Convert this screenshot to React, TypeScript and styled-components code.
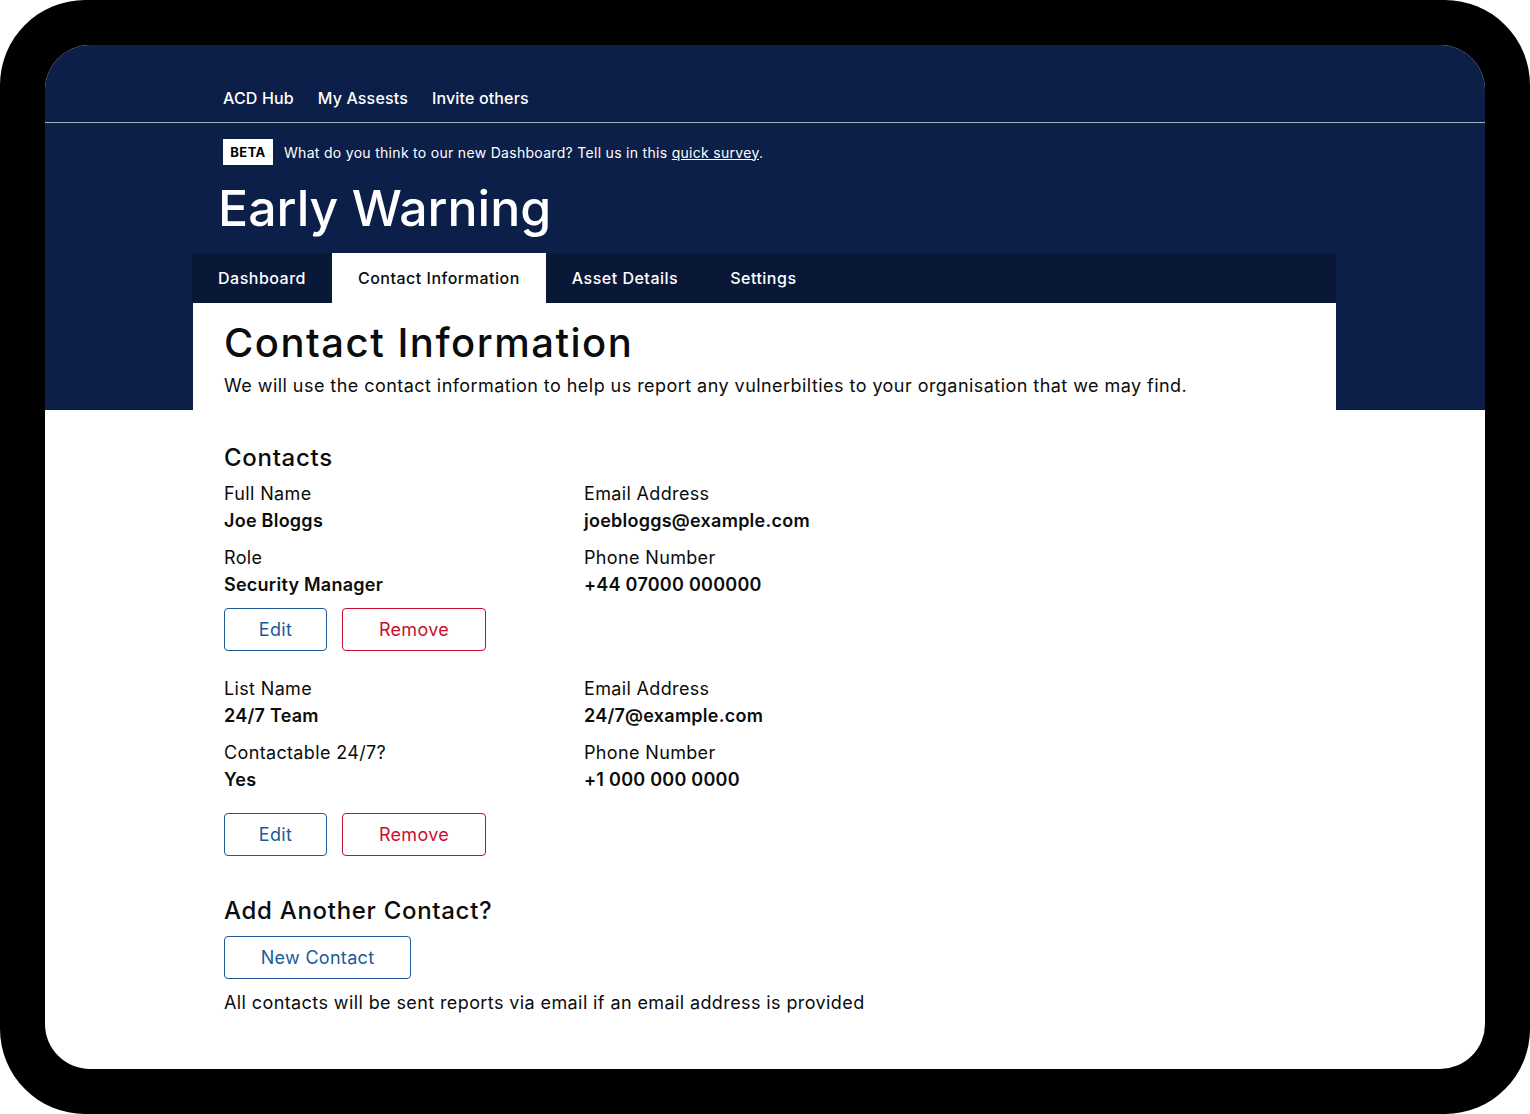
import React from "react";
import styled, { createGlobalStyle } from "styled-components";

const Global = createGlobalStyle`
  html, body { margin: 0; padding: 0; background: #ffffff; }
  body { font-family: "Inter", "Noto Sans", sans-serif; color: #0b0c0c; }
  * { box-sizing: border-box; }
`;

const NAVY = "#0c1f48";
const NAVY_DARK = "#0a1838";

const Frame = styled.div`
  width: 1530px;
  height: 1114px;
  background: #000;
  border-radius: 85px;
  padding: 45px;
`;

const Screen = styled.div`
  width: 100%;
  height: 100%;
  background: #fff;
  border-radius: 45px;
  overflow: hidden;
`;

const Header = styled.header`
  background: ${NAVY};
  color: #fff;
`;

const TopNav = styled.nav`
  display: flex;
  gap: 24px;
  padding: 42px 0 13px 178px;
  border-bottom: 1px solid #a9afbd;
`;

const NavLink = styled.a`
  font-size: 16px;
  line-height: 22px;
  font-weight: 500;
  letter-spacing: 0.15px;
  color: #fff;
  text-decoration: none;
`;

const Container = styled.div`
  width: 1144px;
  margin: 0 0 0 147px;
`;

const Intro = styled.div`
  padding: 16px 31px 15px;
`;

const BetaRow = styled.div`
  display: flex;
  align-items: center;
  gap: 11px;
  font-size: 14px;
  letter-spacing: 0.3px;
`;

const BetaTag = styled.span`
  display: inline-flex;
  align-items: center;
  justify-content: center;
  width: 50px;
  height: 26px;
  background: #fff;
  color: #000;
  font-weight: 700;
  font-size: 13px;
  letter-spacing: 0.4px;
`;

const Survey = styled.a`
  color: #fff;
  text-decoration: underline;
`;

const Title = styled.h1`
  margin: 13px 0 0 -5px;
  font-size: 50px;
  line-height: 60px;
  font-weight: 500;
`;

const Tabs = styled.div`
  display: flex;
  height: 50px;
  background: ${NAVY_DARK};
`;

const Tab = styled.a<{ $active?: boolean }>`
  display: flex;
  align-items: center;
  padding: 0 26px 0 26px;
  font-size: 16px;
  font-weight: 500;
  letter-spacing: 0.5px;
  text-decoration: none;
  color: ${(p) => (p.$active ? "#0b0c0c" : "#fff")};
  background: ${(p) => (p.$active ? "#fff" : "transparent")};
`;

const Panel = styled.div`
  background: #fff;
  color: #0b0c0c;
  margin-left: 1px;
  padding: 16px 31px 11px 31px;
`;

const PageTitle = styled.h2`
  margin: 0;
  font-size: 40px;
  line-height: 48px;
  font-weight: 500;
  letter-spacing: 1.5px;
`;

const Lead = styled.p`
  margin: 6px 0 0;
  font-size: 18px;
  line-height: 26px;
  letter-spacing: 0.45px;
`;

const Main = styled.main`
  padding: 32px 32px 0;
`;

const SectionTitle = styled.h3<{ $mt?: number }>`
  margin: ${(p) => p.$mt ?? 0}px 0 0;
  font-size: 24px;
  line-height: 32px;
  font-weight: 500;
  letter-spacing: 0.7px;
`;

const ContactBlock = styled.section<{ $mt: number }>`
  margin-top: ${(p) => p.$mt}px;
`;

const Fields = styled.dl`
  display: grid;
  grid-template-columns: 360px 1fr;
  row-gap: 10px;
  margin: 0;
`;

const Field = styled.div``;

const Label = styled.dt`
  font-size: 18px;
  line-height: 27px;
  letter-spacing: 0.35px;
`;

const Value = styled.dd`
  margin: 0;
  font-size: 18px;
  line-height: 27px;
  font-weight: 600;
  letter-spacing: 0.25px;
`;

const Actions = styled.div<{ $mt: number }>`
  display: flex;
  gap: 15px;
  margin-top: ${(p) => p.$mt}px;
`;

const Button = styled.button<{ $tone: "blue" | "red"; $w: number }>`
  width: ${(p) => p.$w}px;
  height: 43px;
  background: #fff;
  border: 1px solid ${(p) => (p.$tone === "blue" ? "#1d5a96" : "#c8102e")};
  color: ${(p) => (p.$tone === "blue" ? "#1d5a96" : "#c8102e")};
  border-radius: 4px;
  font-family: inherit;
  font-size: 18px;
  letter-spacing: 0.3px;
  cursor: pointer;
`;

const Note = styled.p`
  margin: 10px 0 0;
  font-size: 18px;
  line-height: 27px;
  letter-spacing: 0.4px;
`;

type FieldT = { label: string; value: string };

const contacts: { fields: FieldT[]; gap: number; mt: number }[] = [
  {
    fields: [
      { label: "Full Name", value: "Joe Bloggs" },
      { label: "Email Address", value: "joebloggs@example.com" },
      { label: "Role", value: "Security Manager" },
      { label: "Phone Number", value: "+44 07000 000000" },
    ],
    gap: 10,
    mt: 6,
  },
  {
    fields: [
      { label: "List Name", value: "24/7 Team" },
      { label: "Email Address", value: "24/7@example.com" },
      { label: "Contactable 24/7?", value: "Yes" },
      { label: "Phone Number", value: "+1 000 000 0000" },
    ],
    gap: 20,
    mt: 24,
  },
];

export default function App() {
  return (
    <>
      <Global />
      <Frame>
        <Screen>
          <Header>
            <TopNav>
              <NavLink href="#">ACD Hub</NavLink>
              <NavLink href="#">My Assests</NavLink>
              <NavLink href="#">Invite others</NavLink>
            </TopNav>
            <Container>
              <Intro>
                <BetaRow>
                  <BetaTag>BETA</BetaTag>
                  <span>
                    What do you think to our new Dashboard? Tell us in this{" "}
                    <Survey href="#">quick survey</Survey>.
                  </span>
                </BetaRow>
                <Title>Early Warning</Title>
              </Intro>
              <Tabs>
                <Tab href="#">Dashboard</Tab>
                <Tab href="#" $active>
                  Contact Information
                </Tab>
                <Tab href="#">Asset Details</Tab>
                <Tab href="#">Settings</Tab>
              </Tabs>
              <Panel>
                <PageTitle>Contact Information</PageTitle>
                <Lead>
                  We will use the contact information to help us report any vulnerbilties to your
                  organisation that we may find.
                </Lead>
              </Panel>
            </Container>
          </Header>
          <Container>
            <Main>
              <SectionTitle>Contacts</SectionTitle>
              {contacts.map((c, i) => (
                <ContactBlock key={i} $mt={c.mt}>
                  <Fields>
                    {c.fields.map((f) => (
                      <Field key={f.label + f.value}>
                        <Label>{f.label}</Label>
                        <Value>{f.value}</Value>
                      </Field>
                    ))}
                  </Fields>
                  <Actions $mt={c.gap}>
                    <Button $tone="blue" $w={103}>
                      Edit
                    </Button>
                    <Button $tone="red" $w={144}>
                      Remove
                    </Button>
                  </Actions>
                </ContactBlock>
              ))}
              <SectionTitle $mt={39}>Add Another Contact?</SectionTitle>
              <Actions $mt={9}>
                <Button $tone="blue" $w={187}>
                  New Contact
                </Button>
              </Actions>
              <Note>All contacts will be sent reports via email if an email address is provided</Note>
            </Main>
          </Container>
        </Screen>
      </Frame>
    </>
  );
}
